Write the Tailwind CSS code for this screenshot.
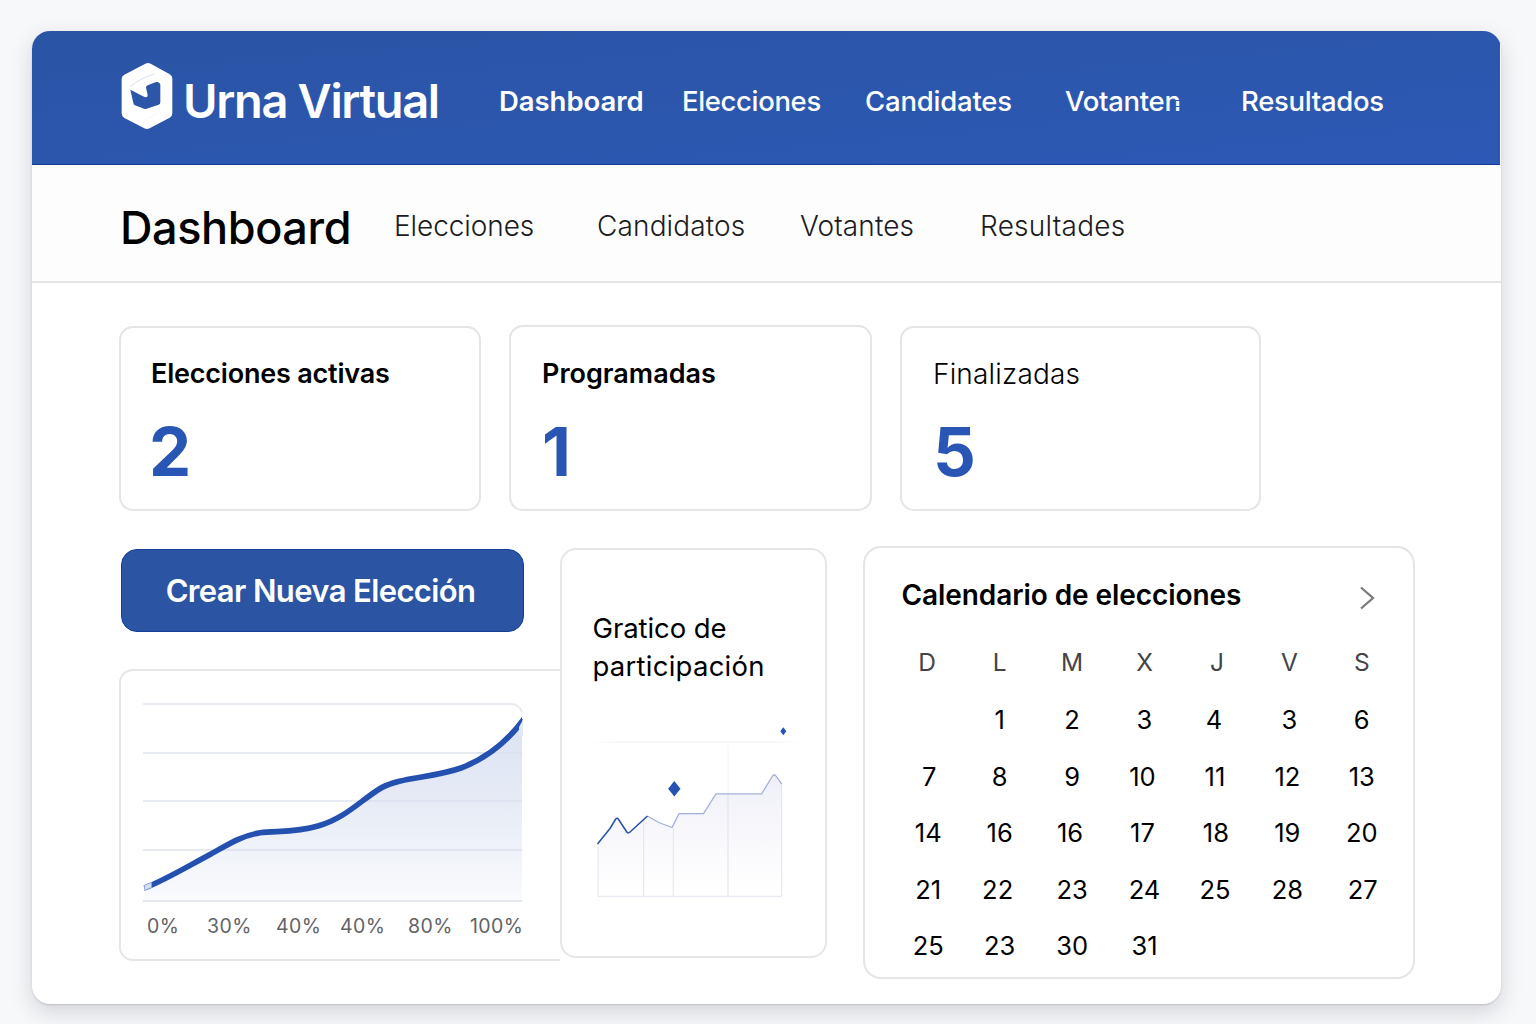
<!DOCTYPE html>
<html lang="es">
<head>
<meta charset="utf-8">
<title>Urna Virtual</title>
<script src="https://cdn.jsdelivr.net/npm/@tailwindcss/browser@4"></script>
</head>
<body class="h-[1024px] w-[1536px] overflow-hidden bg-[#f7f8fa] pt-[31px] pl-8 font-['Inter',sans-serif] text-black">
<div class="h-[973px] w-[1469px] overflow-hidden rounded-[18px] bg-white shadow-[0_8px_22px_rgba(30,35,45,0.17),0_1px_2px_rgba(0,0,0,0.14)]">

  <header class="flex h-[134px] w-[1468px] items-center border-b border-[#12399c] bg-linear-to-br from-[#2a54a4] to-[#2d59b6] pl-[89px] text-white">
    <svg class="-mt-[3px] h-[68px] w-[54px] shrink-0" viewBox="64 66 162 204" aria-hidden="true">
      <path d="M137 71Q145 67 153 71L209 102Q218 107 218 117V220Q218 229 210 233L150 265Q142 269 134 265L74 234Q66 230 66 220V116Q66 108 74 104Z" fill="#fff"/>
      <path d="M92 149L133 170Q144 175 144 164L139 143Q139 138 144 136L167 127Q174 124 179 129Q182 132 182 136V187Q182 192 177 194L141 206Q135 208 129 205L106 196Q102 194 101 189Z" fill="#2b56a9"/>
      <path d="M93 139Q122 114 163 103" fill="none" stroke="#ccd7ef" stroke-width="2.500" stroke-linecap="round"/>
      <path d="M138 238L176 219" fill="none" stroke="#edf1fa" stroke-width="2"/>
    </svg>
    <span class="w-[324px] shrink-0 pt-[5px] pl-[8px] text-[47px] leading-none font-semibold tracking-[-1.35px]">Urna Virtual</span>
    <nav class="grid grid-cols-[183px_183px_200px_176px_auto] pt-[6px] text-[27.5px] leading-8 font-medium">
      <a class="font-semibold tracking-[-0.05px]">Dashboard</a>
      <a class="tracking-[-0.36px]">Elecciones</a>
      <a class="tracking-[-0.2px]">Candidates</a>
      <a class="relative justify-self-start tracking-[-0.3px]">Votanten<i class="absolute top-[15px] right-[1px] h-px w-[5px] bg-[#2c57ae]"></i><i class="absolute top-[21px] right-[1px] h-px w-[5px] bg-[#2c57ae]"></i></a>
      <a class="tracking-[-0.3px]">Resultados</a>
    </nav>
  </header>

  <div class="flex h-[118px] items-center border-b-2 border-[#e3e4e8] bg-[#fdfdfe] pl-[88px]">
    <h1 class="w-[274px] pt-[8px] text-[45px] leading-none font-medium tracking-[-0.4px]">Dashboard</h1>
    <nav class="grid grid-cols-[203px_203px_180px_auto] pt-[6px] text-[28px] leading-8 font-light text-[#1c1c1e]">
      <a class="tracking-[-0.08px]">Elecciones</a>
      <a class="tracking-[0.13px]">Candidatos</a>
      <a class="tracking-[0.1px]">Votantes</a>
      <a class="tracking-[0.24px]">Resultades</a>
    </nav>
  </div>

  <main class="pl-[87px]">
    <section class="mt-[42px] flex items-end gap-[28px]">
      <div class="h-[185px] w-[362px] rounded-[14px] border-2 border-[#e5e5e7] pt-[26px] pl-[30px]">
        <h2 class="text-[27px] leading-10 font-semibold tracking-[-0.2px]">Elecciones activas</h2>
        <p class="mt-[23px] -ml-0.5 text-[67px] leading-[70px] font-bold text-[#2955b5]">2</p>
      </div>
      <div class="h-[186px] w-[363px] rounded-[14px] border-2 border-[#e5e5e7] pt-[27px] pl-[31px]">
        <h2 class="text-[27px] leading-10 font-semibold">Programadas</h2>
        <p class="mt-[23px] text-[67px] leading-[70px] font-bold text-[#2955b5]">1</p>
      </div>
      <div class="h-[185px] w-[361px] rounded-[14px] border-2 border-[#e5e5e7] pt-[26px] pl-[31px]">
        <h2 class="text-[28px] leading-10 font-light tracking-[0.18px]">Finalizadas</h2>
        <p class="mt-[23px] text-[67px] leading-[70px] font-bold text-[#2955b5]">5</p>
      </div>
    </section>

    <section class="mt-[35px] flex items-start">
      <div class="w-[441px] pt-[3px]">
        <button class="ml-[2px] block h-[83px] w-[403px] rounded-[16px] border border-[#153f97] bg-[#2b54a3] pr-1 pt-[2px] text-[31px] font-semibold tracking-[-0.62px] text-white">Crear Nueva Elección</button>
        <div class="mt-[37px] h-[292px] rounded-l-[14px] border-2 border-r-0 border-[#e6e6e8] pt-[29px] pl-[21px]">
          <svg class="block h-[204px] w-[381px]" viewBox="142 700 381 204">
            <defs>
              <linearGradient id="area" x1="0" y1="720" x2="0" y2="902" gradientUnits="userSpaceOnUse">
                <stop offset="0" stop-color="#dbe2f2"/><stop offset=".45" stop-color="#e6ebf6"/><stop offset="1" stop-color="#fafbfd"/>
              </linearGradient>
              <clipPath id="plot"><rect x="142" y="700" width="380" height="204"/></clipPath>
            </defs>
            <g fill="none" stroke="#e8eaf1" stroke-width="2">
              <path d="M143 704H511Q519 704 522 712"/><path d="M143 753H484M143 801H364M143 850H210"/>
            </g>
            <g clip-path="url(#plot)">
              <path d="M144.500 888C163 881 183 869 210 854.500C229 844 241 836 260 832.700C277 830.800 296 832.500 318 826C345 818.500 361 800 381 788C400 777 433 778 461 768C490 757 510 738 524 719V902H144.500Z" fill="url(#area)"/>
              <path d="M478 753H522M360 801H522M210 850H522" stroke="#d9dfed" stroke-width="1.500"/>
              <path d="M143 901H522" stroke="#e5e8f0" stroke-width="2"/>
              <path d="M144.500 888C163 881 183 869 210 854.500C229 844 241 836 260 832.700C277 830.800 296 832.500 318 826C345 818.500 361 800 381 788C400 777 433 778 461 768C490 757 510 738 524 719" fill="none" stroke="#2450b0" stroke-width="5.600"/>
            </g>
            <path d="M144.500 885L151.500 882.500V887.500L144.500 890.500Z" fill="#d5def2" stroke="#8fa5d8" stroke-width=".8"/>
            <path d="M519 724L523 721V736H519Z" fill="#e3e8f6"/>
            <path d="M518 727L522 719" stroke="#2450b0" stroke-width="2"/>
          </svg>
          <div class="mt-[9px] grid grid-cols-[60px_69px_64px_68px_62px_auto] pl-[5px] text-[19.5px] leading-[26px] tracking-[0.4px] text-[#636365]">
            <span>0%</span><span>30%</span><span>40%</span><span>40%</span><span>80%</span><span>100%</span>
          </div>
        </div>
      </div>

      <div class="mt-[2px] h-[410px] w-[267px] rounded-[16px] border-2 border-[#e6e6e8] bg-white pt-[59px] pl-[30px]">
        <h2 class="pl-[0.5px] text-[27.5px] leading-[38px]"><span class="block tracking-[-0.08px]">Gratico de</span><span class="block tracking-[0.25px]">participación</span></h2>
        <svg class="mt-[37px] block h-[180px] w-[210px]" viewBox="592 722 210 180">
          <defs>
            <linearGradient id="soft" x1="0" y1="775" x2="0" y2="897" gradientUnits="userSpaceOnUse">
              <stop offset="0" stop-color="#efeff8"/><stop offset=".6" stop-color="#fafafd"/><stop offset="1" stop-color="#fff"/>
            </linearGradient>
            <linearGradient id="fade" x1="590" y1="0" x2="802" y2="0" gradientUnits="userSpaceOnUse">
              <stop offset="0" stop-color="#fff"/><stop offset=".15" stop-color="#efeff5"/><stop offset=".85" stop-color="#efeff5"/><stop offset="1" stop-color="#fff"/>
            </linearGradient>
          </defs>
          <rect x="592" y="741.500" width="208" height="1.200" fill="url(#fade)"/>
          <path d="M598 843.500L610 828.500L615.700 819Q617 817.500 618.300 819L626.500 831.500Q628 834 630 832L647.500 816L658.700 822.500L672 827.500L679 813.700H703.500L716 793.800H761.700L772.500 776Q774.300 773.500 776 776L781.700 784V896H598Z" fill="url(#soft)"/>
          <path d="M598 844V896.300H781.700V784M643.700 820V896M673.300 828V896" fill="none" stroke="#e3e3ef"/>
          <path d="M728 746V793" stroke="#f4f4f9"/><path d="M728 794V896" stroke="#dfdfec"/>
          <path d="M647.500 816L658.700 822.500L672 827.500L679 813.700H703.500L716 793.800H761.700L772.500 776Q774.300 773.500 776 776L781.700 784" fill="none" stroke="#a3b0da" stroke-width="1.300"/>
          <path d="M597.500 844L610 828.500L615.700 819Q617 817.500 618.300 819L626.500 831.500Q628 834 630 832L647.500 816" fill="none" stroke="#2450a8" stroke-width="1.500"/>
          <path d="M674.300 781L680.500 788.700L674.300 796.500L668.100 788.700Z" fill="#2653b3"/>
          <path d="M783.300 727.300L786.300 731.300L783.300 735.300L780.300 731.300Z" fill="#2653b3"/>
        </svg>
      </div>

      <div class="ml-[36px] h-[433px] w-[552px] rounded-[18px] border-2 border-[#e5e5e7] bg-white pt-[27px] pl-[26px]">
        <div class="flex items-start justify-between pr-[38px] pl-[10.5px]">
          <h2 class="text-[28px] leading-10 font-semibold tracking-[-0.08px]">Calendario de elecciones</h2>
          <svg class="mt-[10.500px] h-6 w-4" viewBox="0 0 16 24" fill="none" stroke="#7b7b7d" stroke-width="2.300"><path d="M2 1.500L14 12L2 22.500"/></svg>
        </div>
        <div class="mt-[19px] grid w-[507px] grid-cols-7 text-center text-[24.5px] leading-[56px] text-[#444446]">
          <span>D</span><span>L</span><span>M</span><span>X</span><span>J</span><span>V</span><span>S</span>
        </div>
        <div class="mt-[2px] grid w-[507px] grid-cols-7 text-center text-[25.5px] leading-[56.5px]">
          <span></span><span>1</span><span>2</span><span>3</span><span class="pr-1.5">4</span><span>3</span><span>6</span>
          <span class="pl-1">7</span><span>8</span><span>9</span><span class="pr-1">10</span><span class="pr-1">11</span><span class="pr-1">12</span><span>13</span>
          <span class="pl-0.5">14</span><span>16</span><span class="pr-1">16</span><span class="pr-1">17</span><span class="pr-0.5">18</span><span class="pr-1">19</span><span>20</span>
          <span class="pl-0.5">21</span><span class="pr-1">22</span><span>23</span><span>24</span><span class="pr-1">25</span><span class="pr-1">28</span><span class="pl-0.5">27</span>
          <span class="pl-0.5">25</span><span>23</span><span>30</span><span>31</span>
        </div>
      </div>
    </section>
  </main>
</div>
</body>
</html>
